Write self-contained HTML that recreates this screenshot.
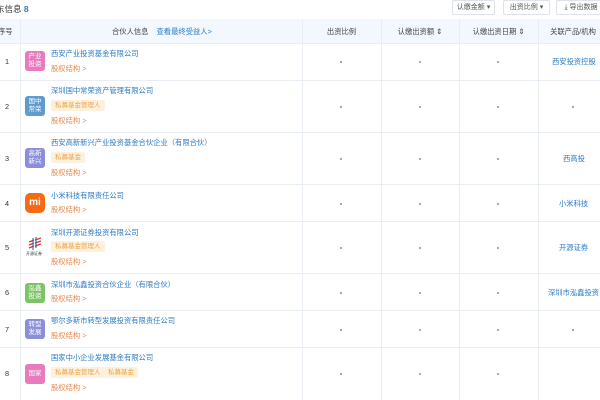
<!DOCTYPE html>
<html><head><meta charset="utf-8"><style>
*{margin:0;padding:0;box-sizing:border-box}
body{width:600px;height:400px;overflow:hidden;background:#fff;font-family:"Liberation Sans","Noto Sans CJK SC",sans-serif;position:relative;color:#333}
.a{position:absolute;white-space:nowrap}
.f{font-size:7.3px;line-height:9px}
.hl{position:absolute;left:0;width:600px;height:1px;background:#e9eef4}
.vl{position:absolute;top:19px;height:381px;width:1px;background:#e9eef4}
.nm{color:#2b7bc6}
.eq{color:#e58a50}
.tag{position:absolute;background:#fdf1de;color:#e9a54a;font-size:6.5px;line-height:11px;padding:0 4px;border-radius:2px;white-space:nowrap}
.logo{position:absolute;left:25px;width:20px;height:20px;border-radius:3px;color:#fff;font-size:6.5px;line-height:8px;text-align:center;padding-top:2px}
.c{text-align:center;color:#666}
.btn{position:absolute;top:0px;height:15px;border:1px solid #dfe3e8;border-radius:2px;font-size:7px;line-height:13px;color:#555;text-align:center;background:#fff}
.dash{position:absolute;font-size:8px;color:#555;width:20px;text-align:center;font-weight:bold}
</style></head><body>
<div class="a" style="left:-4px;top:3px;font-size:8.5px;color:#333">东信息 <span style="color:#2b7bc6;font-weight:bold">8</span></div>
<div class="btn" style="left:452px;width:43px">认缴金额 ▾</div>
<div class="btn" style="left:503px;width:47px">出资比例 ▾</div>
<div class="btn" style="left:556px;width:50px">⤓ 导出数据</div>

<div class="a" style="left:0;top:19px;width:600px;height:24px;background:#f2f8fd"></div>
<div class="a f" style="left:-2px;top:27px;color:#444">序号</div>
<div class="a f" style="left:112px;top:27px;color:#444">合伙人信息 <span style="color:#2b7bc6;margin-left:6px">查看最终受益人&gt;</span></div>
<div class="a f c" style="left:302px;width:79px;top:27px;color:#444">出资比例</div>
<div class="a f c" style="left:381px;width:78px;top:27px;color:#444">认缴出资额 ⇕</div>
<div class="a f c" style="left:459px;width:79px;top:27px;color:#444">认缴出资日期 ⇕</div>
<div class="a f c" style="left:538px;width:70px;top:27px;color:#444">关联产品/机构</div>

<div class="hl" style="top:43px"></div><div class="hl" style="top:80px"></div><div class="hl" style="top:132px"></div><div class="hl" style="top:184px"></div><div class="hl" style="top:221px"></div><div class="hl" style="top:273px"></div><div class="hl" style="top:310px"></div><div class="hl" style="top:347px"></div>
<div class="vl" style="left:20px"></div><div class="vl" style="left:302px"></div><div class="vl" style="left:381px"></div><div class="vl" style="left:459px"></div><div class="vl" style="left:538px"></div>

<!-- row1 -->
<div class="a f" style="left:5px;top:57px">1</div>
<div class="logo" style="top:51px;background:#e77bbd">产业<br>投资</div>
<div class="a f nm" style="left:51px;top:49px">西安产业投资基金有限公司</div>
<div class="a f eq" style="left:51px;top:64px">股权结构 &gt;</div>
<!-- row2 -->
<div class="a f" style="left:5px;top:102px">2</div>
<div class="logo" style="top:96px;background:#5f9bcc">国中<br>常荣</div>
<div class="a f nm" style="left:51px;top:86px">深圳国中常荣资产管理有限公司</div>
<div class="tag" style="left:51px;top:100px">私募基金管理人</div>
<div class="a f eq" style="left:51px;top:116px">股权结构 &gt;</div>
<!-- row3 -->
<div class="a f" style="left:5px;top:154px">3</div>
<div class="logo" style="top:148px;background:#8b8fda">高新<br>新兴</div>
<div class="a f nm" style="left:51px;top:138px">西安高新新兴产业投资基金合伙企业（有限合伙）</div>
<div class="tag" style="left:51px;top:152px">私募基金</div>
<div class="a f eq" style="left:51px;top:168px">股权结构 &gt;</div>
<!-- row4 -->
<div class="a f" style="left:5px;top:199px">4</div>
<div class="logo" style="top:193px;background:#f56a14;border-radius:5px;font-size:10px;line-height:16px;font-weight:bold">mi</div>
<div class="a f nm" style="left:51px;top:191px">小米科技有限责任公司</div>
<div class="a f eq" style="left:51px;top:205px">股权结构 &gt;</div>
<!-- row5 -->
<div class="a f" style="left:5px;top:243px">5</div>
<div class="a" style="left:27px;top:236px;width:16px;height:14px">
<svg width="16" height="16" viewBox="0 0 16 16"><path d="M2 6l5-2M2 9l5-2M2 12l5-2M8 4l6-2M8 7l6-2M8 10l6-2" stroke="#d9342b" stroke-width="1.3"/><path d="M6 2v12M9 1v11" stroke="#3566b0" stroke-width="1.1"/></svg></div>
<div class="a" style="left:26px;top:251px;font-size:4px;color:#333">开源证券</div>
<div class="a f nm" style="left:51px;top:228px">深圳开源证券投资有限公司</div>
<div class="tag" style="left:51px;top:241px">私募基金管理人</div>
<div class="a f eq" style="left:51px;top:257px">股权结构 &gt;</div>
<!-- row6 -->
<div class="a f" style="left:5px;top:288px">6</div>
<div class="logo" style="top:283px;background:#7cc466">泓鑫<br>投资</div>
<div class="a f nm" style="left:51px;top:280px">深圳市泓鑫投资合伙企业（有限合伙）</div>
<div class="a f eq" style="left:51px;top:294px">股权结构 &gt;</div>
<!-- row7 -->
<div class="a f" style="left:5px;top:325px">7</div>
<div class="logo" style="top:319px;background:#8b8fda">转型<br>发展</div>
<div class="a f nm" style="left:51px;top:316px">鄂尔多斯市转型发展投资有限责任公司</div>
<div class="a f eq" style="left:51px;top:331px">股权结构 &gt;</div>
<!-- row8 -->
<div class="a f" style="left:5px;top:369px">8</div>
<div class="logo" style="top:364px;background:#e77bbd;padding-top:6px">国家</div>
<div class="a f nm" style="left:51px;top:353px">国家中小企业发展基金有限公司</div>
<div class="tag" style="left:51px;top:367px">私募基金管理人</div>
<div class="tag" style="left:104px;top:367px">私募基金</div>
<div class="a f eq" style="left:51px;top:383px">股权结构 &gt;</div>

<!-- dashes -->
<div class="dash" style="left:331px;top:57px">-</div><div class="dash" style="left:410px;top:57px">-</div><div class="dash" style="left:488px;top:57px">-</div>
<div class="dash" style="left:331px;top:102px">-</div><div class="dash" style="left:410px;top:102px">-</div><div class="dash" style="left:488px;top:102px">-</div><div class="dash" style="left:563px;top:102px">-</div>
<div class="dash" style="left:331px;top:154px">-</div><div class="dash" style="left:410px;top:154px">-</div><div class="dash" style="left:488px;top:154px">-</div>
<div class="dash" style="left:331px;top:199px">-</div><div class="dash" style="left:410px;top:199px">-</div><div class="dash" style="left:488px;top:199px">-</div>
<div class="dash" style="left:331px;top:243px">-</div><div class="dash" style="left:410px;top:243px">-</div><div class="dash" style="left:488px;top:243px">-</div>
<div class="dash" style="left:331px;top:288px">-</div><div class="dash" style="left:410px;top:288px">-</div><div class="dash" style="left:488px;top:288px">-</div>
<div class="dash" style="left:331px;top:325px">-</div><div class="dash" style="left:410px;top:325px">-</div><div class="dash" style="left:488px;top:325px">-</div><div class="dash" style="left:563px;top:325px">-</div>
<div class="dash" style="left:331px;top:369px">-</div><div class="dash" style="left:410px;top:369px">-</div><div class="dash" style="left:488px;top:369px">-</div>

<div class="a f nm" style="left:552px;top:57px">西安投资控股</div>
<div class="a f nm" style="left:563px;top:154px">西高投</div>
<div class="a f nm" style="left:559px;top:199px">小米科技</div>
<div class="a f nm" style="left:559px;top:243px">开源证券</div>
<div class="a f nm" style="left:548px;top:288px">深圳市泓鑫投资</div>
</body></html>
